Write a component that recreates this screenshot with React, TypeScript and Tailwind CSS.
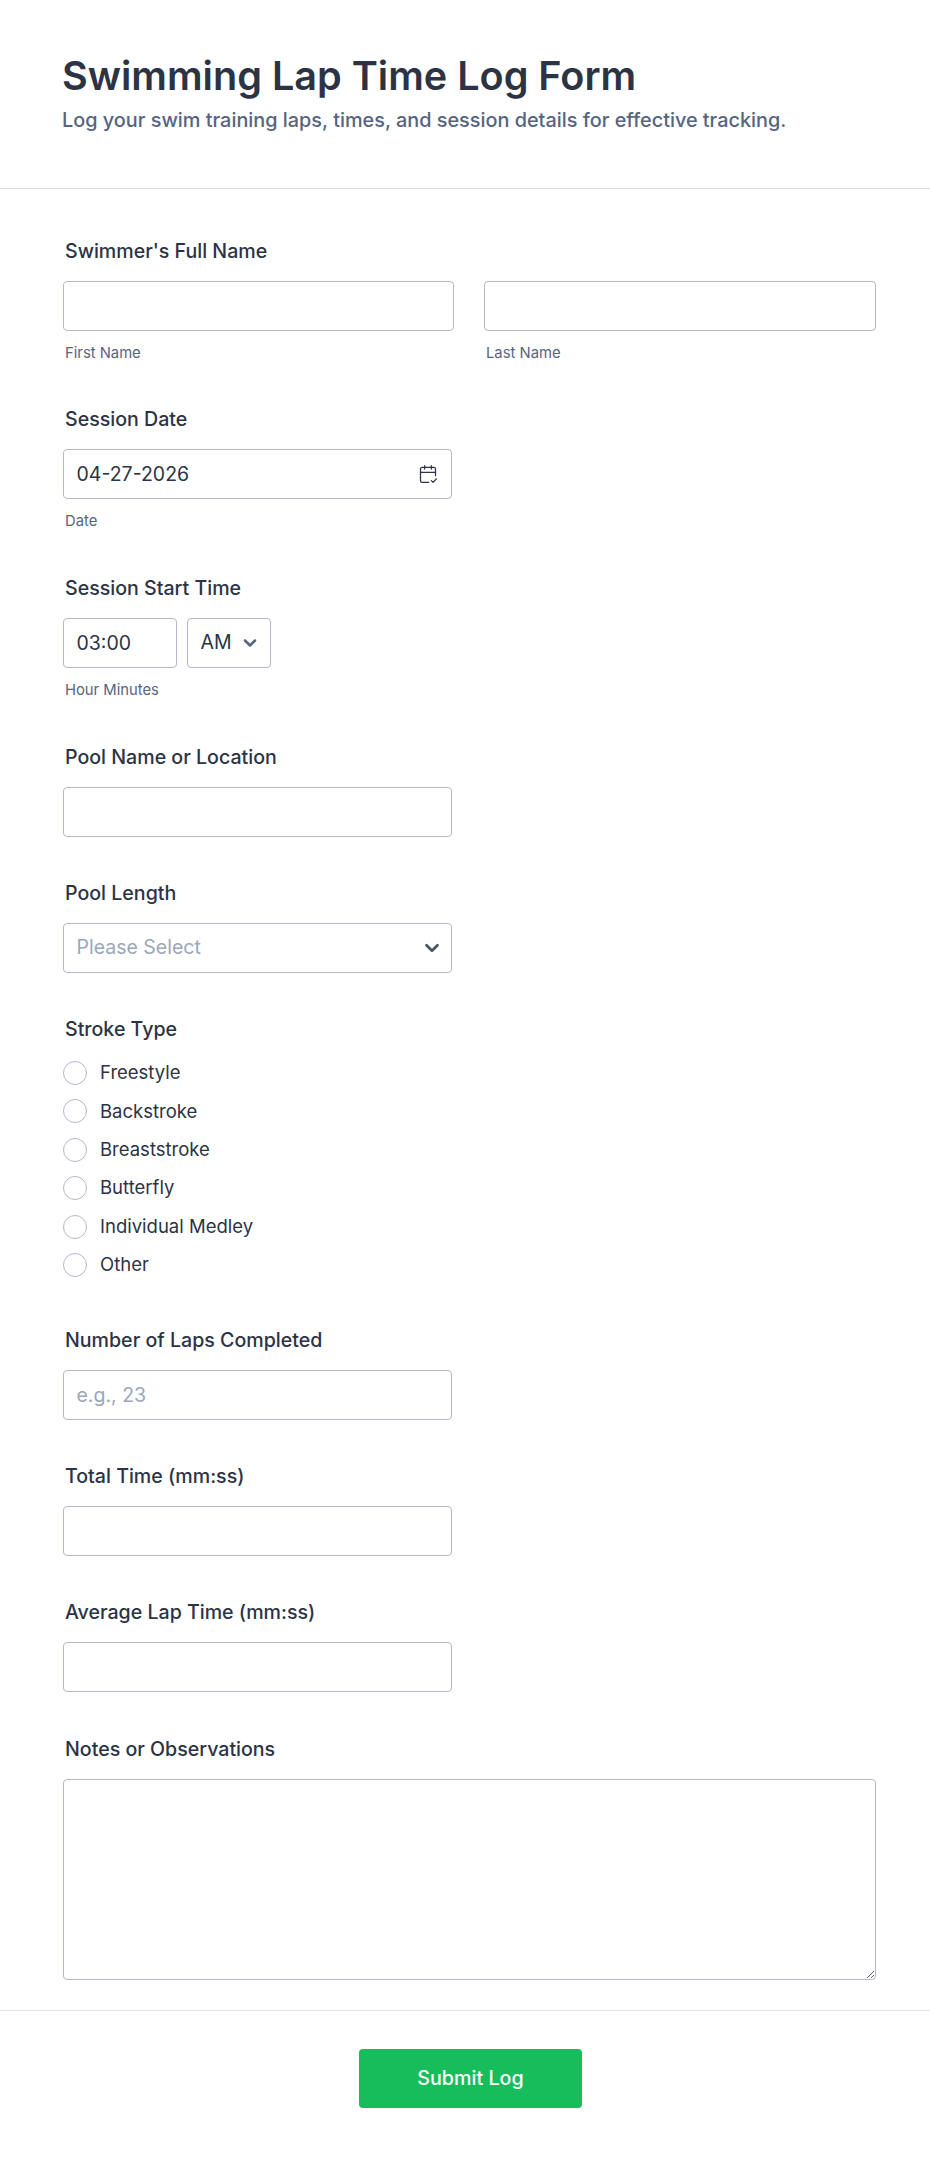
import React from 'react';
import { CalendarCheck2, ChevronDown } from 'lucide-react';

const inputClass =
    'h-[50px] w-full rounded-[4px] border border-[#b4b8cc] bg-white px-[12.5px] text-[19.5px] text-[#2c3345] outline-none placeholder:text-[#9aa7ba]';

const Label: React.FC<{ children: React.ReactNode }> = ({ children }) => (
    <p className="ml-[2px] mb-[18px] text-[19.6px] leading-[24px] font-medium text-[#2c3345]">{children}</p>
);

const Sub: React.FC<{ children: React.ReactNode }> = ({ children }) => (
    <p className="ml-[2px] mt-[13px] text-[14.8px] leading-[19px] text-[#57647e]">{children}</p>
);

const strokes = ['Freestyle', 'Backstroke', 'Breaststroke', 'Butterfly', 'Individual Medley', 'Other'];

const App: React.FC = () => {
    return (
        <div className="flex h-[2158px] w-full flex-col overflow-hidden bg-white font-['Inter',sans-serif] text-[#2c3345]">
            <header className="h-[189px] border-b border-[#d8dae9] pl-[62px] pt-[50px]">
                <h1 className="text-[39.6px] leading-[52px] font-semibold text-[#2c3345]">Swimming Lap Time Log Form</h1>
                <p className="mt-[4px] text-[19.85px] leading-[28px] font-medium text-[#57647e]">
                    Log your swim training laps, times, and session details for effective tracking.
                </p>
            </header>

            <form className="flex flex-1 flex-col pl-[63px] pt-[50px]">
                <div className="mb-[44px]">
                    <Label>Swimmer's Full Name</Label>
                    <div className="flex w-[813px] gap-[30px]">
                        <div className="w-[391px]">
                            <input className={inputClass} />
                            <Sub>First Name</Sub>
                        </div>
                        <div className="flex-1">
                            <input className={inputClass} />
                            <Sub>Last Name</Sub>
                        </div>
                    </div>
                </div>

                <div className="mb-[45px]">
                    <Label>Session Date</Label>
                    <div className="relative w-[389px]">
                        <input className={inputClass} defaultValue="04-27-2026" />
                        <CalendarCheck2 className="absolute top-[15px] right-[14px] size-[20px] text-[#2c3345]" strokeWidth={1.5} />
                    </div>
                    <Sub>Date</Sub>
                </div>

                <div className="mb-[45px]">
                    <Label>Session Start Time</Label>
                    <div className="flex gap-[10px]">
                        <input className={`${inputClass} !w-[114px]`} defaultValue="03:00" />
                        <div className="relative w-[84px]">
                            <select className={`${inputClass} appearance-none`} defaultValue="AM">
                                <option>AM</option>
                                <option>PM</option>
                            </select>
                            <ChevronDown className="absolute top-[15px] right-[11px] size-[20px] text-[#57647e]" strokeWidth={3} />
                        </div>
                    </div>
                    <Sub>Hour Minutes</Sub>
                </div>

                <div className="mb-[44px]">
                    <Label>Pool Name or Location</Label>
                    <input className={`${inputClass} !w-[389px]`} />
                </div>

                <div className="mb-[44px]">
                    <Label>Pool Length</Label>
                    <div className="relative w-[389px]">
                        <select className={`${inputClass} appearance-none !text-[#9aa7ba]`} defaultValue="">
                            <option value="">Please Select</option>
                        </select>
                        <ChevronDown className="absolute top-[14px] right-[9px] size-[22px] text-[#49536a]" strokeWidth={3} />
                    </div>
                </div>

                <div className="mb-[51px]">
                    <Label>Stroke Type</Label>
                    <div className="mt-[-16px] pt-[18px] flex flex-col gap-[14.4px]">
                        {strokes.map((s) => (
                            <label key={s} className="flex h-[24px] items-center gap-[13px] text-[18.5px] text-[#2c3345]">
                                <span className="size-[24px] rounded-full border border-[#b4b8cc] bg-white" />
                                {s}
                            </label>
                        ))}
                    </div>
                </div>

                <div className="mb-[44px]">
                    <Label>Number of Laps Completed</Label>
                    <input className={`${inputClass} !w-[389px]`} placeholder="e.g., 23" />
                </div>

                <div className="mb-[44px]">
                    <Label>Total Time (mm:ss)</Label>
                    <input className={`${inputClass} !w-[389px]`} />
                </div>

                <div className="mb-[45px]">
                    <Label>Average Lap Time (mm:ss)</Label>
                    <input className={`${inputClass} !w-[389px]`} />
                </div>

                <div>
                    <Label>Notes or Observations</Label>
                    <textarea className={`${inputClass} !h-[201px] !w-[813px] block`} />
                </div>
            </form>

            <footer className="flex h-[148px] justify-center border-t border-[#e3e5f5] pl-[11px] pt-[38px]">
                <button className="h-[59px] w-[223px] rounded-[4px] bg-[#18bd5b] text-[19.7px] font-medium text-white">
                    Submit Log
                </button>
            </footer>
        </div>
    );
};

export default App;
